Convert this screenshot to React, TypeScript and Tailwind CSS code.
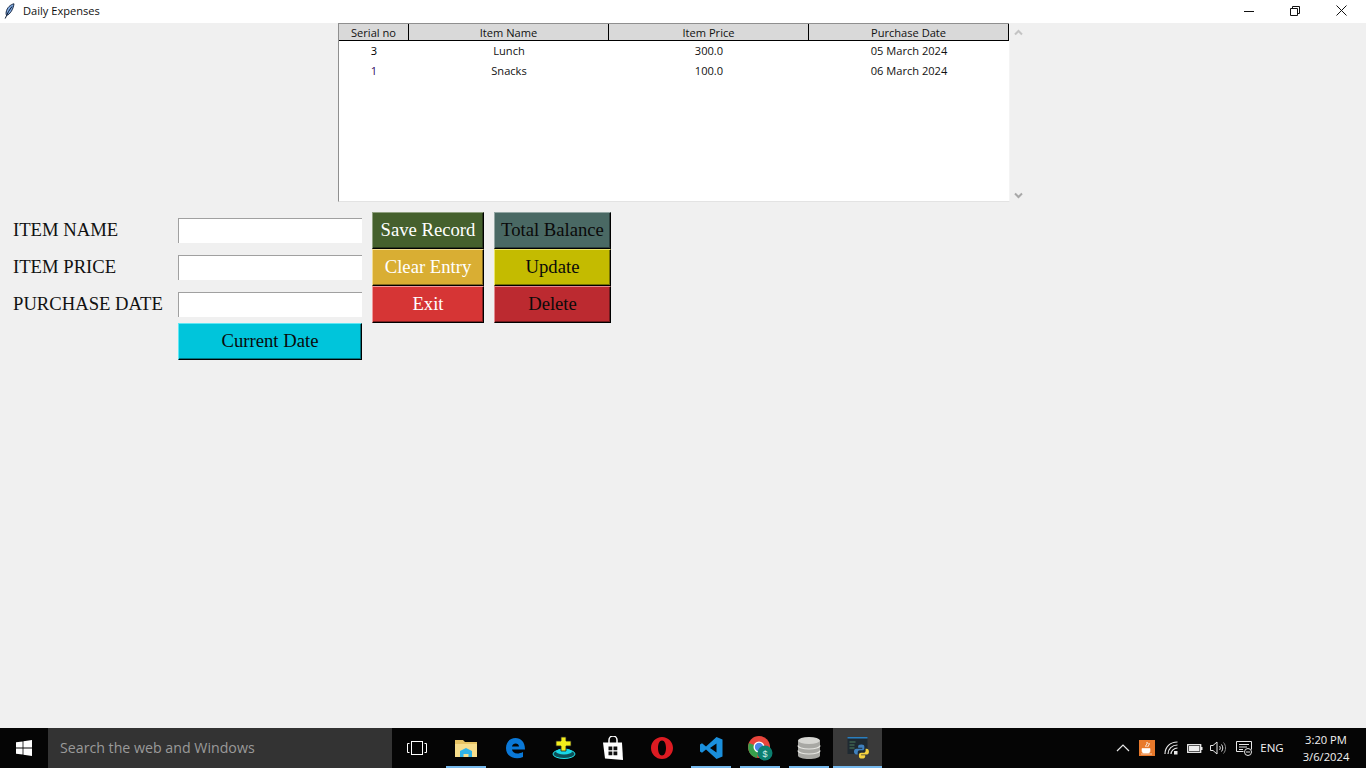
const rows = [
  { serial: "3", name: "Lunch", price: "300.0", date: "05 March 2024", serialColor: "text-black" },
  { serial: "1", name: "Snacks", price: "100.0", date: "06 March 2024", serialColor: "text-[#2f0a62]" },
];

const uiFont = "font-['Open_Sans','Noto_Sans',sans-serif]";
const serif = "font-['Liberation_Serif',serif]";

function FeatherIcon() {
  return (
    <svg width="11" height="16" viewBox="0 0 11 16">
      <path d="M10 .8C6.500 1.500 3 4.500 2.200 9c-.3 1.700 0 2.800.5 3.300C6 11.500 9.200 6.500 10 .8Z" fill="#7fa9e0" stroke="#0b1a33" strokeWidth=".9" />
      <path d="M8 3.500 4.500 8.500 1.200 15.500" fill="none" stroke="#0b1a33" strokeWidth="1" />
    </svg>
  );
}

function WindowControls() {
  return (
    <div className="flex mr-[2px] h-full">
      <div className="w-[46px] flex items-center justify-center">
        <svg width="10" height="10" viewBox="0 0 10 10" className="mb-[2px]"><path d="M0 5.5h10" stroke="#111" /></svg>
      </div>
      <div className="w-[46px] flex items-center justify-center">
        <svg width="10" height="10" viewBox="0 0 10 10" className="mb-[2px]">
          <path d="M.5 2.5h7v7h-7zM2.5 2.5v-2h7v7h-2" fill="none" stroke="#111" />
        </svg>
      </div>
      <div className="w-[46px] flex items-center justify-center">
        <svg width="11" height="11" viewBox="0 0 11 11" className="mb-[2px]"><path d="M.5.5l10 10M10.5.5l-10 10" stroke="#111" /></svg>
      </div>
    </div>
  );
}

function ExpenseTable() {
  return (
    <div className="flex pl-[338px]">
      <div className={`w-[672px] h-[179px] bg-white border-l border-[#8f8f8f] border-r border-r-[#f4f4f4] border-b border-b-[#e3e3e3] text-[11.100px] ${uiFont}`}>
        <div className="flex h-[18px] bg-[#d9d9d9] border-t border-t-[#8f8f8f] border-b border-b-black leading-[17px] text-center text-[#111]">
          <div className="w-[70px] border-r border-black">Serial no</div>
          <div className="w-[200px] border-r border-black">Item Name</div>
          <div className="w-[200px] border-r border-black">Item Price</div>
          <div className="w-[200px] border-r border-black">Purchase Date</div>
        </div>
        {rows.map((r) => (
          <div key={r.serial} className="flex h-[20px] leading-[20px] text-center text-[#111]">
            <div className={`w-[70px] ${r.serialColor}`}>{r.serial}</div>
            <div className="w-[200px]">{r.name}</div>
            <div className="w-[200px]">{r.price}</div>
            <div className="w-[200px]">{r.date}</div>
          </div>
        ))}
      </div>
      <div className="w-[17px] h-[179px] flex flex-col items-center justify-between pt-[6px] pb-[3px]">
        <svg width="9" height="7" viewBox="0 0 9 7"><path d="M1 5.5l3.5-3.5 3.5 3.5" fill="none" stroke="#c4c4c4" strokeWidth="2" /></svg>
        <svg width="9" height="7" viewBox="0 0 9 7"><path d="M1 1.5l3.5 3.5 3.5-3.5" fill="none" stroke="#a8a8a8" strokeWidth="2" /></svg>
      </div>
    </div>
  );
}

function TkButton({ label, className }: { label: string; className: string }) {
  return (
    <button className={`h-[37px] w-full border border-b-black border-r-black shadow-[inset_-1px_-1px_0_rgba(0,0,0,0.4)] text-center text-[18.670px] leading-none ${className}`}>
      {label}
    </button>
  );
}

function Field({ label }: { label: string }) {
  return (
    <>
      <div className="h-[37px] flex items-center pb-[2px] text-[18.670px] text-[#111]">{label}</div>
      <div className="h-[37px] flex items-center">
        <div className="w-full h-[25px] bg-white border-t border-l border-[#a0a0a0]" />
      </div>
    </>
  );
}

function ExpenseForm() {
  return (
    <div className={`mt-[10px] ml-[13px] grid grid-cols-[165px_184px_112px_117px] gap-x-0 ${serif}`}>
      <Field label="ITEM NAME" />
      <div className="ml-[10px] w-[112px]"><TkButton label="Save Record" className="bg-[#45602d] text-white border-t-[#8fa07f] border-l-[#8fa07f]" /></div>
      <div className="ml-[20px] w-[117px]"><TkButton label="Total Balance" className="bg-[#4a6964] text-[#0a0a0a] border-t-[#93a6a3] border-l-[#93a6a3]" /></div>
      <Field label="ITEM PRICE" />
      <div className="ml-[10px] w-[112px]"><TkButton label="Clear Entry" className="bg-[#d9ae33] text-white border-t-[#f2db8f] border-l-[#f2db8f]" /></div>
      <div className="ml-[20px] w-[117px]"><TkButton label="Update" className="bg-[#c4bb00] text-[#0a0a0a] border-t-[#ece56a] border-l-[#ece56a]" /></div>
      <Field label="PURCHASE DATE" />
      <div className="ml-[10px] w-[112px]"><TkButton label="Exit" className="bg-[#d63535] text-white border-t-[#f09a9a] border-l-[#f09a9a]" /></div>
      <div className="ml-[20px] w-[117px]"><TkButton label="Delete" className="bg-[#bc2a30] text-[#0a0a0a] border-t-[#e28a8e] border-l-[#e28a8e]" /></div>
      <div />
      <div className="w-[184px]"><TkButton label="Current Date" className="bg-[#00c5db] text-[#0a0a0a] border-t-[#5fe8f5] border-l-[#5fe8f5]" /></div>
    </div>
  );
}

function WindowsLogo() {
  return (
    <svg width="16" height="16" viewBox="0 0 16 16" fill="#fff">
      <path d="M0 2.3 6.6 1.4v6.2H0zM7.4 1.3 16 0v7.6H7.4zM0 8.4h6.6v6.2L0 13.7zM7.4 8.4H16V16l-8.6-1.3z" />
    </svg>
  );
}

const taskIcons = [
  {
    id: "taskview", active: false, selected: false,
    icon: (
      <svg width="20" height="14" viewBox="0 0 20 14" fill="none" stroke="#fff" strokeWidth="1">
        <rect x="4.5" y=".5" width="11" height="13" />
        <path d="M2.5 2.5H.5v9h2M17.500 2.500h2v9h-2" />
      </svg>
    ),
  },
  {
    id: "explorer", active: true, selected: false,
    icon: (
      <svg width="22" height="18" viewBox="0 0 22 18">
        <path d="M0 1h8l2 2h12v15H0z" fill="#e8c465" />
        <path d="M0 5h22v13H0z" fill="#f7dd8c" />
        <path d="M5 18v-6l6-3 6 3v6h-3.500v-3h-5v3z" fill="#2fb4ea" />
      </svg>
    ),
  },
  {
    id: "edge", active: false, selected: false,
    icon: (
      <svg width="20" height="22" viewBox="0 0 20 22">
        <path d="M1 11C1 5 5 1 10.500 1 16 1 20 5 20 12.500H7c.3 3.500 5 5.500 11 2.500v5c-7 3-17 .5-17-9Zm6-1.500h7c0-4-6.500-4-7 0Z" fill="#0a78d7" fillRule="evenodd" />
      </svg>
    ),
  },
  {
    id: "plus", active: false, selected: false,
    icon: (
      <svg width="24" height="24" viewBox="0 0 24 24">
        <ellipse cx="12" cy="18" rx="11" ry="4.500" fill="#0b4f58" stroke="#21e2e8" strokeWidth="1" />
        <ellipse cx="12" cy="15.500" rx="8" ry="3" fill="#18d8e6" />
        <path d="M9 1h5v4h5v5h-5v5H9v-5H4V5h5z" fill="#f4ee1c" stroke="#222" strokeWidth=".8" />
      </svg>
    ),
  },
  {
    id: "store", active: false, selected: false,
    icon: (
      <svg width="20" height="24" viewBox="0 0 20 24">
        <path d="M6 7V4a4 4 0 0 1 8 0v3" fill="none" stroke="#fff" strokeWidth="1.500" />
        <path d="M0 6.500h19L20 24 2 22.500z" fill="#fff" />
        <path d="M5.500 10.500h3.800v3.800H5.500zM10.500 10.500h3.800v3.800h-3.800zM5.500 15.500h3.800v3.800H5.500zM10.500 15.500h3.800v3.800h-3.800z" fill="#111" />
      </svg>
    ),
  },
  {
    id: "opera", active: false, selected: false,
    icon: (
      <svg width="24" height="24" viewBox="0 0 24 24">
        <path d="M12 1C5.800 1 1 6 1 12s4.800 11 11 11 11-5 11-11S18.200 1 12 1Zm0 3.500c2.600 0 4 3.500 4 7.500s-1.400 7.500-4 7.500S8 16 8 12s1.400-7.500 4-7.500Z" fill="#dd1b22" fillRule="evenodd" />
      </svg>
    ),
  },
  {
    id: "vscode", active: true, selected: false,
    icon: (
      <svg width="24" height="24" viewBox="0 0 24 24">
        <path d="M17.500 1 23.500 3.500v17L17.500 23 7 13.500l-4 3.200-2-1.200V8.500l2-1.200 4 3.200zM17.500 7.500 11 12l6.500 4.500z" fill="#1a8fdc" fillRule="evenodd" />
      </svg>
    ),
  },
  {
    id: "chrome", active: true, selected: false,
    icon: (
      <svg width="26" height="26" viewBox="0 0 26 26">
        <circle cx="12" cy="12" r="11" fill="#e8453c" />
        <path d="M12 12 2 8a11 11 0 0 0 8 15z" fill="#37a04c" />
        <path d="M12 12h11a11 11 0 0 1-10 11z" fill="#f6c51b" />
        <circle cx="12" cy="12" r="5.500" fill="#fff" />
        <circle cx="12" cy="12" r="4.200" fill="#4a86e8" />
        <circle cx="18" cy="18" r="7.500" fill="#0c7f70" />
        <text x="18" y="21.500" textAnchor="middle" fontSize="9" fill="#cfeee8" fontFamily="Liberation Sans, sans-serif">$</text>
      </svg>
    ),
  },
  {
    id: "database", active: true, selected: false,
    icon: (
      <svg width="24" height="24" viewBox="0 0 24 24">
        <path d="M1 4.500v15C1 21.500 6 23 12 23s11-1.500 11-3.500v-15z" fill="#a8a8a4" />
        <ellipse cx="12" cy="4.500" rx="11" ry="3.500" fill="#d6d6d2" />
        <path d="M1 9.500c0 2 5 3.500 11 3.500s11-1.500 11-3.500M1 14.500c0 2 5 3.500 11 3.500s11-1.500 11-3.500" fill="none" stroke="#e6e6e2" strokeWidth="1.200" />
      </svg>
    ),
  },
  {
    id: "python", active: true, selected: true,
    icon: (
      <svg width="24" height="24" viewBox="0 0 24 24">
        <rect x="1.500" y="1" width="20" height="17" fill="#1f2a32" />
        <rect x="1.500" y="1" width="20" height="1.500" fill="#2a7fbf" />
        <path d="M3.500 6h6M3.500 9h5M3.500 12h5" stroke="#4f7f5f" strokeWidth="1" />
        <g transform="translate(3 3.500) scale(.83)">
          <path d="M15 6c-3 0-4 1-4 2.500V10h5v1H9c-2 0-3 1.500-3 3.500S7 18 9 18h1.500v-2.500c0-1.500 1-2.500 2.500-2.500h3c1.500 0 2.500-1 2.500-2.500v-2C18.500 7 17.500 6 15 6Z" fill="#3f80bd" />
          <path d="M15.500 23c3 0 4-1 4-2.500V19h-5v-1h7c2 0 2.500-1.500 2.500-3.500S23 11 21 11h-1v2.500c0 1.500-1 2.500-2.500 2.500h-3C13 16 12 17 12 18.500v2c0 1.500 1 2.500 3.500 2.500Z" fill="#f5d33f" />
        </g>
      </svg>
    ),
  },
];

function TrayIcons() {
  return (
    <div className="flex items-center h-full">
      <div className="w-[24px] flex justify-center">
        <svg width="14" height="8" viewBox="0 0 14 8"><path d="M1 7l6-6 6 6" fill="none" stroke="#e8e8e8" strokeWidth="1.200" /></svg>
      </div>
      <div className="w-[24px] flex justify-center">
        <div className="w-[16px] h-[16px] bg-[#e8792b] flex items-center justify-center">
          <svg width="12" height="13" viewBox="0 0 12 13">
            <path d="M6 0c1 2-2 3-1 5M8 1c1 2-2 3-1 4" fill="none" stroke="#fff" strokeWidth="1" />
            <path d="M1 6.500h8v2.500c0 1.500-1 2-2 2H3c-1 0-2-.5-2-2zM0 12h11" fill="#fff" stroke="#fff" strokeWidth=".6" />
          </svg>
        </div>
      </div>
      <div className="w-[25px] flex justify-center">
        <svg width="15" height="14" viewBox="0 0 15 14" fill="none" stroke="#e8e8e8" strokeWidth="1.200">
          <path d="M1 13C1 6 6 1 13.500 1M4 13c0-5 4-9 9.500-9M7 13c0-3 3-6 6.500-6" />
          <rect x="10" y="10" width="3.500" height="3.500" fill="#e8e8e8" stroke="none" />
        </svg>
      </div>
      <div className="w-[22px] flex justify-center">
        <svg width="16" height="9" viewBox="0 0 16 9" fill="none">
          <rect x=".7" y=".7" width="13" height="7.600" stroke="#eee" strokeWidth="1.300" />
          <rect x="2" y="2" width="10.500" height="5" fill="#eee" />
          <rect x="14" y="3" width="1.500" height="3" fill="#eee" />
        </svg>
      </div>
      <div className="w-[24px] flex justify-center">
        <svg width="17" height="14" viewBox="0 0 17 14" fill="none" stroke="#e8e8e8" strokeWidth="1">
          <path d="M.5 4.500h2.500L7 1v12L3 9.500H.5z" />
          <path d="M9.500 5c1 1 1 3 0 4M11.500 3.500c1.700 2 1.700 5 0 7" />
          <path d="M13.500 1.500c2.700 3 2.700 8 0 11" stroke="#8a8a8a" />
        </svg>
      </div>
      <div className="w-[28px] flex justify-center">
        <svg width="17" height="15" viewBox="0 0 17 15" fill="none" stroke="#e8e8e8" strokeWidth="1">
          <path d="M.5.500h15v8M.5.500v10h7" />
          <path d="M3 3.500h10M3 6h8M3 8.500h4" />
          <circle cx="12" cy="11" r="3.500" fill="#000" />
          <path d="M10 11h4" />
        </svg>
      </div>
      <div className="w-[28px] text-center text-[11.500px] text-[#f2f2f2]">ENG</div>
    </div>
  );
}

function Taskbar() {
  return (
    <div className={`h-[40px] bg-[#050505] flex items-stretch ${uiFont}`}>
      <div className="w-[48px] flex items-center justify-center"><WindowsLogo /></div>
      <div className="w-[344px] bg-[#333333] flex items-center pl-[12px] text-[14.200px] text-[#9a9a9a]">Search the web and Windows</div>
      <div className="flex">
        {taskIcons.map((t) => (
          <div key={t.id} className={`relative w-[49px] flex items-center justify-center ${t.selected ? "bg-[#3a3a3a]" : ""}`}>
            {t.icon}
            {t.active && <div className={`absolute bottom-0 h-[2px] bg-[#76b9ed] ${t.selected ? "left-0 right-0" : "left-[5px] right-[4px]"}`} />}
          </div>
        ))}
      </div>
      <div className="ml-auto flex">
        <TrayIcons />
        <div className="w-[66px] ml-[7px] mr-[7px] flex flex-col justify-center text-center text-[11.200px] leading-[17px] text-[#f2f2f2]">
          <div>3:20 PM</div>
          <div>3/6/2024</div>
        </div>
      </div>
    </div>
  );
}

export default function App() {
  return (
    <div className="h-[768px] w-[1366px] flex flex-col overflow-hidden bg-[#f0f0f0]">
      <div className={`h-[23px] bg-white flex items-center justify-between ${uiFont}`}>
        <div className="flex items-center pl-[4px] text-[11.100px] text-[#111]">
          <FeatherIcon />
          <span className="ml-[8px]">Daily Expenses</span>
        </div>
        <WindowControls />
      </div>
      <div className="flex-1">
        <ExpenseTable />
        <ExpenseForm />
      </div>
      <Taskbar />
    </div>
  );
}
